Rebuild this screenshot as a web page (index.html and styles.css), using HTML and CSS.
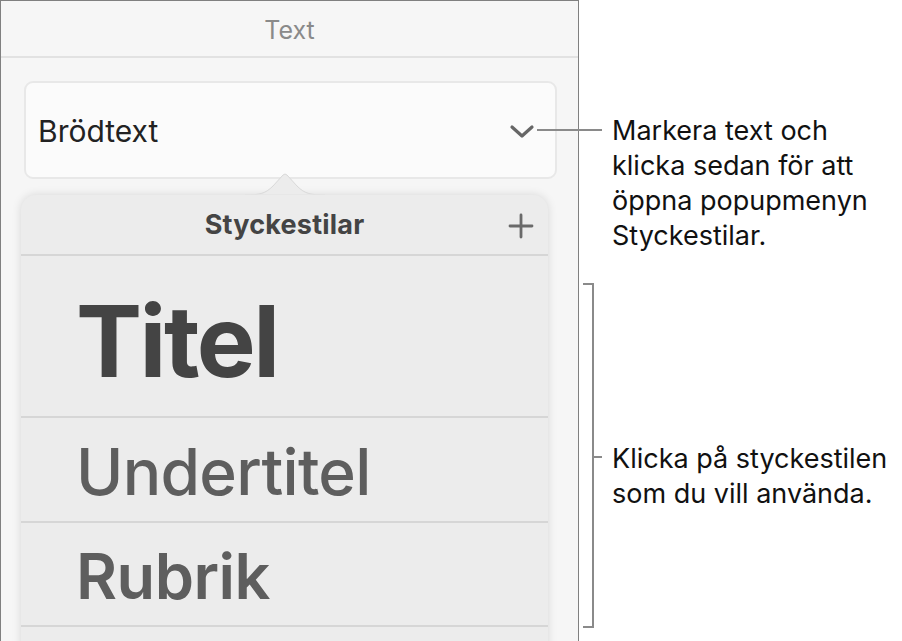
FILE: index.html
```html
<!DOCTYPE html>
<html lang="sv">
<head>
<meta charset="utf-8">
<title>Styckestilar</title>
<link rel="stylesheet" href="styles.css">
</head>
<body>
<div class="stage">
  <div class="panel">
    <div class="panel-header">Text</div>
    <div class="field">
      <span class="field-label">Brödtext</span>
      <svg class="chevron" width="26" height="16" viewBox="0 0 26 16"><path d="M3 3 L13 12 L23 3" fill="none" stroke="#666" stroke-width="3.2" stroke-linecap="round" stroke-linejoin="round"/></svg>
    </div>
    <div class="popover">
      <svg class="pop-arrow" width="80" height="28" viewBox="0 0 80 28"><path d="M0 27 C14 27 20 26 28 18 L38 7 Q40 5 42 7 L52 18 C60 26 66 27 80 27 Z" fill="#ececec" stroke="#d9d9d9" stroke-width="1"/><rect x="0" y="26.5" width="80" height="2" fill="#ececec"/></svg>
      <div class="pop-header">
        <span class="pop-title">Styckestilar</span>
        <svg class="plus" width="26" height="26" viewBox="0 0 26 26"><path d="M13 2 V24 M2 13 H24" stroke="#6a6a6a" stroke-width="2.8" stroke-linecap="round"/></svg>
      </div>
      <div class="row row-title"><span>Titel</span></div>
      <div class="row row-sub"><span>Undertitel</span></div>
      <div class="row row-head"><span>Rubrik</span></div>
      <div class="row row-more"></div>
    </div>
  </div>
  <div class="notes">
    <p class="note note-1">Markera text och<br>klicka sedan för att<br>öppna popupmenyn<br>Styckestilar.</p>
    <p class="note note-2">Klicka på styckestilen<br>som du vill använda.</p>
  </div>
  <div class="leader leader-1"></div>
  <div class="bracket"></div>
  <div class="leader leader-2"></div>
</div>
</body>
</html>
```

FILE: styles.css
```css
html, body {
  margin: 0;
  padding: 0;
  background: #ffffff;
}
body {
  width: 902px;
  height: 641px;
  overflow: hidden;
  font-family: Inter, "Liberation Sans", sans-serif;
}
.stage {
  position: relative;
  display: flex;
  width: 902px;
  height: 641px;
}
.panel {
  width: 577px;
  height: 640px;
  flex: none;
  background: #f6f6f6;
  border: 1px solid #808080;
  border-bottom: none;
  overflow: hidden;
  display: flex;
  flex-direction: column;
}
.panel > * {
  flex-shrink: 0;
}
.panel-header {
  height: 57px;
  box-sizing: border-box;
  border-bottom: 2px solid #e2e2e2;
  display: flex;
  align-items: center;
  justify-content: center;
  font-size: 25px;
  color: #8a8a8a;
  padding-top: 2px;
}
.field {
  margin: 23px 0 0 23px;
  width: 533px;
  height: 98px;
  box-sizing: border-box;
  background: #fbfbfb;
  border: 2px solid #e8e8e8;
  border-radius: 9px;
  display: flex;
  align-items: center;
  justify-content: space-between;
  padding: 2px 20px 0 12px;
}
.field-label {
  font-size: 30px;
  color: #222222;
}
.chevron {
  margin-top: 2px;
}
.popover {
  position: relative;
  margin: 16px 0 0 20px;
  width: 527px;
  height: 460px;
  background: #ececec;
  border-radius: 15px 15px 0 0;
  box-shadow: 0 0 10px rgba(0, 0, 0, 0.13);
}
.pop-arrow {
  position: absolute;
  left: 224px;
  top: -27px;
}
.pop-header {
  position: relative;
  height: 61px;
  box-sizing: border-box;
  border-bottom: 2px solid #d6d6d6;
  display: flex;
  align-items: center;
  justify-content: center;
}
.pop-title {
  font-size: 27px;
  font-weight: 700;
  color: #444444;
  letter-spacing: 0.2px;
}
.plus {
  position: absolute;
  right: 14px;
  top: 18px;
}
.row {
  border-bottom: 2px solid #d6d6d6;
  display: flex;
  align-items: center;
  box-sizing: border-box;
}
.row-title {
  height: 162px;
  padding: 10px 0 0 55px;
}
.row-title span {
  font-size: 99px;
  font-weight: 700;
  color: #444444;
  letter-spacing: -2.5px;
}
.row-sub {
  height: 105px;
  padding: 4px 0 0 55px;
}
.row-sub span {
  font-size: 64px;
  font-weight: 500;
  color: #5e5e5e;
  letter-spacing: -0.7px;
}
.row-head {
  height: 104px;
  padding: 4px 0 0 55px;
}
.row-head span {
  font-size: 63px;
  font-weight: 600;
  color: #5e5e5e;
  letter-spacing: -0.5px;
}
.row-more {
  height: 60px;
  border-bottom: none;
}
.notes {
  display: flex;
  flex-direction: column;
  padding-left: 33px;
}
.note {
  margin: 0;
  font-size: 27px;
  line-height: 35px;
  color: #111111;
}
.note-1 {
  margin-top: 113px;
}
.note-2 {
  margin-top: 188px;
}
.leader {
  position: absolute;
  height: 2px;
  background: #8a8a8a;
}
.leader-1 {
  left: 537px;
  top: 129px;
  width: 65px;
}
.leader-2 {
  left: 593px;
  top: 456px;
  width: 9px;
}
.bracket {
  position: absolute;
  left: 583px;
  top: 283px;
  width: 9px;
  height: 341px;
  border: 2px solid #8a8a8a;
  border-left: none;
}
```
